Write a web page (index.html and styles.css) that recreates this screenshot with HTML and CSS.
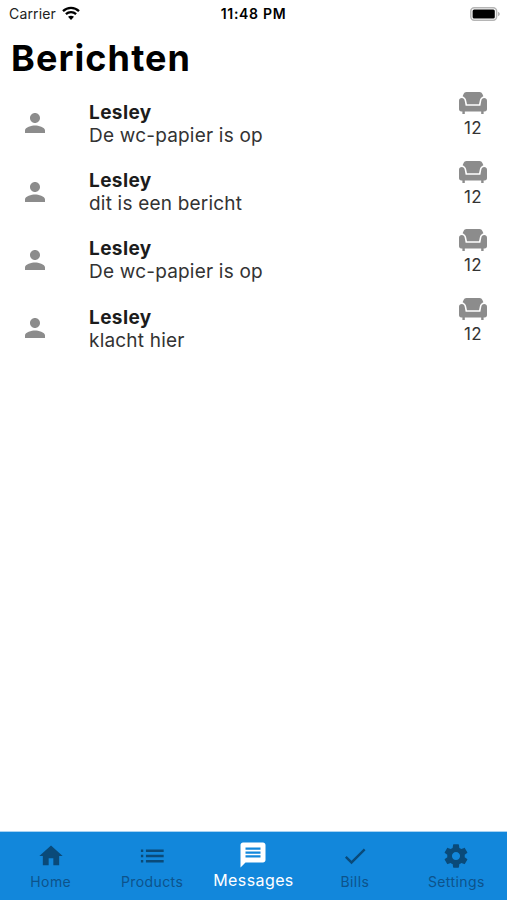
FILE: index.html
```html
<!DOCTYPE html>
<html lang="nl">
<head>
    <meta charset="UTF-8">
    <title>Berichten</title>
    <meta name="viewport" content="width=device-width, initial-scale=1">
    <link rel="stylesheet" href="styles.css">
</head>
<body>
    <svg width="0" height="0" class="symbols">
        <symbol id="person" viewBox="0 0 24 24">
            <path d="M12 12c2.21 0 4-1.79 4-4s-1.79-4-4-4-4 1.790-4 4 1.790 4 4 4zm0 2c-2.670 0-8 1.340-8 4v2h16v-2c0-2.660-5.330-4-8-4z"/>
        </symbol>
        <symbol id="seat" viewBox="0 0 28 22">
            <path d="M7.500 0h13c1.600 0 2.300.7 2.900 2l1 2.200c-2 .9-3.200 2.300-3.600 4.200l-.8 3.800H8l-.8-3.800c-.4-1.900-1.600-3.300-3.600-4.200l1-2.200C5.200.7 5.900 0 7.500 0z"/>
            <path d="M0 8.800C0 7.200 1.200 6.100 2.800 6.100s2.600 1 2.900 2.700l.9 5h14.800l.9-5c.3-1.700 1.300-2.700 2.900-2.700S28 7.200 28 8.800v8.300c0 1.500-.8 2.400-2.400 2.400h-1V22h-2.400v-2.500H5.800V22H3.400v-2.500h-1C.8 19.500 0 18.600 0 17.100z"/>
        </symbol>
    </svg>
    <div class="app">
        <header class="status-bar">
            <div class="carrier">
                <span>Carrier</span>
                <svg class="wifi" viewBox="0 0 18 14">
                    <g fill="none" stroke="#000" stroke-width="2.300">
                        <path d="M1 5.100C5.500.8 12.500.8 17 5.100"/>
                        <path d="M3.900 8.200c2.900-2.700 7.300-2.700 10.200 0"/>
                    </g>
                    <path d="M9 14l-3-3.200c1.700-1.500 4.300-1.500 6 0z"/>
                </svg>
            </div>
            <div class="time">11:48 PM</div>
            <svg class="battery" viewBox="0 0 30 14">
                <rect x=".8" y=".8" width="25.800" height="12.400" rx="3.400" fill="#fff" stroke="#b5b5b5" stroke-width="1.500"/>
                <rect x="2.600" y="2.500" width="22.200" height="9" rx="1.500"/>
                <path d="M28 4.800c2.400.8 2.400 3.600 0 4.400z" fill="#b5b5b5"/>
            </svg>
        </header>
        <h1>Berichten</h1>
        <ul class="messages">
            <li class="message">
                <svg class="avatar"><use href="#person"/></svg>
                <div class="body">
                    <div class="name">Lesley</div>
                    <div class="text">De wc-papier is op</div>
                </div>
                <div class="table">
                    <svg class="seat"><use href="#seat"/></svg>
                    <span>12</span>
                </div>
            </li>
            <li class="message">
                <svg class="avatar"><use href="#person"/></svg>
                <div class="body">
                    <div class="name">Lesley</div>
                    <div class="text">dit is een bericht</div>
                </div>
                <div class="table">
                    <svg class="seat"><use href="#seat"/></svg>
                    <span>12</span>
                </div>
            </li>
            <li class="message">
                <svg class="avatar"><use href="#person"/></svg>
                <div class="body">
                    <div class="name">Lesley</div>
                    <div class="text">De wc-papier is op</div>
                </div>
                <div class="table">
                    <svg class="seat"><use href="#seat"/></svg>
                    <span>12</span>
                </div>
            </li>
            <li class="message">
                <svg class="avatar"><use href="#person"/></svg>
                <div class="body">
                    <div class="name">Lesley</div>
                    <div class="text">klacht hier</div>
                </div>
                <div class="table">
                    <svg class="seat"><use href="#seat"/></svg>
                    <span>12</span>
                </div>
            </li>
        </ul>
        <nav class="tabs">
            <a class="tab">
                <svg viewBox="0 0 24 24"><path d="M10 20v-6h4v6h5v-8h3L12 3 2 12h3v8z"/></svg>
                <span>Home</span>
            </a>
            <a class="tab">
                <svg viewBox="0 0 24 24"><path d="M2.500 6.500h2v2h-2zM2.500 11h2v2h-2zM2.500 15.500h2v2h-2zM6.800 6.500H22v2H6.800zM6.800 11H22v2H6.800zM6.800 15.500H22v2H6.800z"/></svg>
                <span>Products</span>
            </a>
            <a class="tab active">
                <svg viewBox="0 0 24 24"><path d="M20 2H4c-1.100 0-1.990.9-1.990 2L2 22l4-4h14c1.100 0 2-.9 2-2V4c0-1.100-.9-2-2-2z"/><path class="lines" d="M6 6h12v1.800H6zM6 9.100h12v1.800H6zM6 12.200h12V14H6z"/></svg>
                <span>Messages</span>
            </a>
            <a class="tab">
                <svg viewBox="0 0 24 24"><path d="M9 16.170L4.830 12l-1.420 1.410L9 19 21 7l-1.410-1.410z"/></svg>
                <span>Bills</span>
            </a>
            <a class="tab">
                <svg viewBox="0 0 24 24"><path d="M19.430 12.980c.04-.32.07-.64.07-.98s-.03-.66-.07-.98l2.110-1.650c.19-.15.24-.42.12-.64l-2-3.460c-.12-.22-.39-.3-.61-.22l-2.490 1c-.52-.4-1.080-.73-1.690-.98l-.38-2.650C14.460 2.180 14.250 2 14 2h-4c-.25 0-.46.18-.49.42l-.38 2.650c-.61.25-1.170.59-1.690.98l-2.490-1c-.23-.09-.49 0-.61.22l-2 3.460c-.13.22-.07.49.12.64l2.110 1.650c-.04.32-.07.65-.07.98s.03.66.07.98l-2.110 1.650c-.19.15-.24.42-.12.64l2 3.460c.12.22.39.3.61.22l2.490-1c.52.4 1.080.73 1.690.98l.38 2.650c.03.24.24.42.49.42h4c.25 0 .46-.18.49-.42l.38-2.650c.61-.25 1.170-.59 1.690-.98l2.490 1c.23.09.49 0 .61-.22l2-3.460c.12-.22.07-.49-.12-.64l-2.110-1.650zM12 15.500c-1.930 0-3.500-1.570-3.500-3.500s1.570-3.500 3.500-3.500 3.500 1.570 3.500 3.500-1.570 3.500-3.500 3.500z"/></svg>
                <span>Settings</span>
            </a>
        </nav>
    </div>
</body>
</html>
```

FILE: styles.css
```css
* {
    box-sizing: border-box;
}
body {
    margin: 0;
    font-family: Inter, 'Liberation Sans', sans-serif;
    background-color: #fff;
    color: #000;
}
.symbols {
    display: none;
}
.app {
    height: 900px;
    display: flex;
    flex-direction: column;
}
.status-bar {
    height: 27px;
    padding: 0 7px 0 9px;
    display: grid;
    grid-template-columns: 1fr auto 1fr;
    align-items: center;
    font-size: 14px;
}
.carrier {
    display: flex;
    align-items: center;
    gap: 6px;
    color: #222;
    letter-spacing: 0.15px;
}
.wifi {
    width: 18px;
    height: 14px;
    margin-top: -2px;
}
.time {
    font-weight: 600;
    letter-spacing: 0.7px;
    margin-right: 2px;
}
.battery {
    width: 30px;
    height: 14px;
    justify-self: end;
}
h1 {
    margin: 0;
    padding-left: 11px;
    height: 62px;
    line-height: 62px;
    font-size: 36px;
    font-weight: 650;
    letter-spacing: 1.1px;
}
.messages {
    list-style: none;
    margin: 0;
    padding: 0;
    flex-grow: 1;
}
.message {
    height: 68.4px;
    padding: 0 20px;
    display: flex;
    align-items: center;
}
.avatar {
    width: 30px;
    height: 30px;
    fill: #8c8c8c;
}
.body {
    margin-left: 39px;
    padding-top: 1px;
    flex-grow: 1;
    font-size: 19px;
    line-height: 23px;
    letter-spacing: 0.2px;
}
.name {
    font-weight: 700;
    letter-spacing: 0.4px;
    color: #1c1c1c;
}
.text {
    color: #333;
}
.table {
    width: 28px;
    display: flex;
    flex-direction: column;
    align-items: center;
    align-self: flex-start;
    padding-top: 3.4px;
    font-size: 17px;
    line-height: 20px;
    letter-spacing: 0.3px;
    color: #333;
}
.seat {
    width: 28px;
    height: 22px;
    margin-bottom: 4px;
    fill: #8c8c8c;
}
.tabs {
    height: 69px;
    background-color: #1287db;
    border-top: 1px solid #a9d3f2;
    display: grid;
    grid-template-columns: repeat(5, 1fr);
}
.tab {
    display: flex;
    flex-direction: column;
    align-items: center;
    padding-top: 10px;
    font-size: 14px;
    line-height: 20px;
    letter-spacing: 0.4px;
    color: #0d538b;
}
.tab svg {
    width: 28px;
    height: 28px;
    margin-bottom: 2px;
    fill: #0a4a79;
}
.tab.active {
    padding-top: 8px;
    font-size: 16px;
    color: #fff;
}
.tab.active svg {
    width: 30px;
    height: 30px;
    margin-bottom: 0;
    fill: #fff;
}
.tab.active .lines {
    fill: #1287db;
}
```
